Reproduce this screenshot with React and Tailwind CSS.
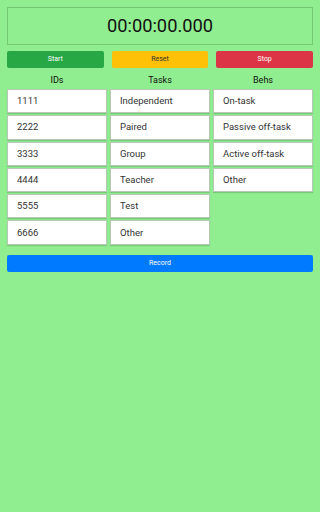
const ids = ["1111", "2222", "3333", "4444", "5555", "6666"];
const tasks = ["Independent", "Paired", "Group", "Teacher", "Test", "Other"];
const behs = ["On-task", "Passive off-task", "Active off-task", "Other"];

function Cell({ label }) {
  return (
    <div className="h-[24.3px] flex items-center pl-[9px] bg-white border border-[#b5c9b5] shadow-[0_1px_1px_rgba(0,0,0,0.15)] text-[9.5px] text-[#333]">
      {label}
    </div>
  );
}

export default function App() {
  return (
    <div className="w-[320px] h-[512px] bg-[#90ee90] px-[7px] pt-[7px] font-['Roboto',sans-serif]">
      <div className="h-[38px] flex items-center justify-center border border-[#74c874] text-[18.3px] text-[#111]">
        00:00:00.000
      </div>

      <div className="grid grid-cols-3 gap-[8px] mt-[6px]">
        <button className="h-[17px] bg-[#28a745] text-white text-[7px] rounded-[2px]">Start</button>
        <button className="h-[17px] bg-[#ffc107] text-[#333] text-[7px] rounded-[2px]">Reset</button>
        <button className="h-[17px] bg-[#dc3545] text-white text-[7px] rounded-[2px]">Stop</button>
      </div>

      <div className="grid grid-cols-3 gap-[3px] mt-[6px]">
        <div className="flex flex-col gap-[2px]">
          <div className="h-[13px] flex items-center justify-center text-[9px] text-[#111]">IDs</div>
          {ids.map((t) => (
            <Cell key={t} label={t} />
          ))}
        </div>
        <div className="flex flex-col gap-[2px]">
          <div className="h-[13px] flex items-center justify-center text-[9px] text-[#111]">Tasks</div>
          {tasks.map((t) => (
            <Cell key={t} label={t} />
          ))}
        </div>
        <div className="flex flex-col gap-[2px]">
          <div className="h-[13px] flex items-center justify-center text-[9px] text-[#111]">Behs</div>
          {behs.map((t) => (
            <Cell key={t} label={t} />
          ))}
        </div>
      </div>

      <button className="w-full h-[17px] mt-[10px] bg-[#007bff] text-white text-[7px] rounded-[2px]">Record</button>
    </div>
  );
}
